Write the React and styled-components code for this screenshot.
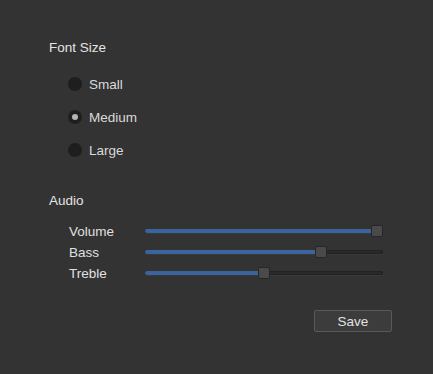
import styled, {createGlobalStyle} from "styled-components";
import {useState} from "react";

const GlobalStyle = createGlobalStyle`
  html, body {
    margin: 0;
    background: #333333;
  }
  body {
    font-family: "Liberation Sans", Arial, sans-serif;
    color: #dedede;
  }
`;

const THUMB = 12;

function Radio({checked, label, onSelect}) {
  return (
    <RadioRow onClick={onSelect}>
      <RadioCircle checked={checked} />
      <RadioLabel>{label}</RadioLabel>
    </RadioRow>
  );
}

function Slider({value}) {
  return (
    <Track>
      <Fill style={{width: `calc(${THUMB / 2}px + ${value} * (100% - ${THUMB}px))`}} />
      <Thumb style={{left: `calc(${value} * (100% - ${THUMB}px))`}} />
    </Track>
  );
}

export default function App() {
  const [size, setSize] = useState("Medium");
  const sliders = [
    {name: "Volume", value: 1},
    {name: "Bass", value: 0.75},
    {name: "Treble", value: 0.5},
  ];

  return (
    <Page>
      <GlobalStyle />
      <SectionTitle>Font Size</SectionTitle>
      <RadioList>
        {["Small", "Medium", "Large"].map(s => (
          <Radio key={s} label={s} checked={size === s} onSelect={() => setSize(s)} />
        ))}
      </RadioList>
      <SectionTitle className="audio">Audio</SectionTitle>
      <SliderList>
        {sliders.map(s => (
          <SliderRow key={s.name}>
            <SliderLabel>{s.name}</SliderLabel>
            <Slider value={s.value} />
          </SliderRow>
        ))}
      </SliderList>
      <Footer>
        <SaveButton>Save</SaveButton>
      </Footer>
    </Page>
  );
}

const Page = styled.div`
  width: 343px;
  padding: 40px 0 0 49px;
  display: flex;
  flex-direction: column;

  .audio {
    margin-top: 33px;
  }
`;

const SectionTitle = styled.div`
  font-size: 13.5px;
  line-height: 16px;
  color: #e4e4e4;
`;

const RadioList = styled.div`
  margin: 18px 0 0 19px;
  display: flex;
  flex-direction: column;
  gap: 13px;
`;

const RadioRow = styled.div`
  height: 20px;
  display: flex;
  align-items: center;
  gap: 7px;
  cursor: pointer;
`;

const RadioCircle = styled.span`
  width: 14px;
  height: 14px;
  border-radius: 50%;
  background: #1e1e1e;
  display: flex;
  align-items: center;
  justify-content: center;

  &::after {
    content: "";
    width: 6px;
    height: 6px;
    border-radius: 50%;
    background: #b4b4b4;
    display: ${props => (props.checked ? "block" : "none")};
  }
`;

const RadioLabel = styled.span`
  font-size: 13.5px;
  color: #dadada;
`;

const SliderList = styled.div`
  margin: 12px 0 0 20px;
  display: flex;
  flex-direction: column;
  gap: 1px;
`;

const SliderRow = styled.div`
  height: 20px;
  display: flex;
  align-items: center;
`;

const SliderLabel = styled.span`
  width: 76px;
  font-size: 13.5px;
  color: #e0e0e0;
`;

const Track = styled.div`
  position: relative;
  width: 238px;
  height: 4px;
  border-radius: 2px;
  background: #292929;
  box-shadow: inset 0 0 0 1px #222222, 0 1px 0 #3a3a3a;
`;

const Fill = styled.div`
  position: absolute;
  left: 0;
  top: 0;
  height: 4px;
  border-radius: 2px;
  background: #3a64a0;
`;

const Thumb = styled.div`
  position: absolute;
  top: -4px;
  width: ${THUMB}px;
  height: ${THUMB}px;
  box-sizing: border-box;
  border-radius: 2px;
  background: #4a4a4a;
  border: 1px solid #262626;
`;

const Footer = styled.div`
  margin-top: 27px;
  display: flex;
  justify-content: flex-end;
`;

const SaveButton = styled.button`
  width: 78px;
  height: 22px;
  box-sizing: border-box;
  padding: 0;
  border-radius: 2px;
  border: 1px solid #595959;
  background: #3c3c3c;
  color: #e2e2e2;
  font-family: "Liberation Sans", Arial, sans-serif;
  font-size: 13.5px;
`;
